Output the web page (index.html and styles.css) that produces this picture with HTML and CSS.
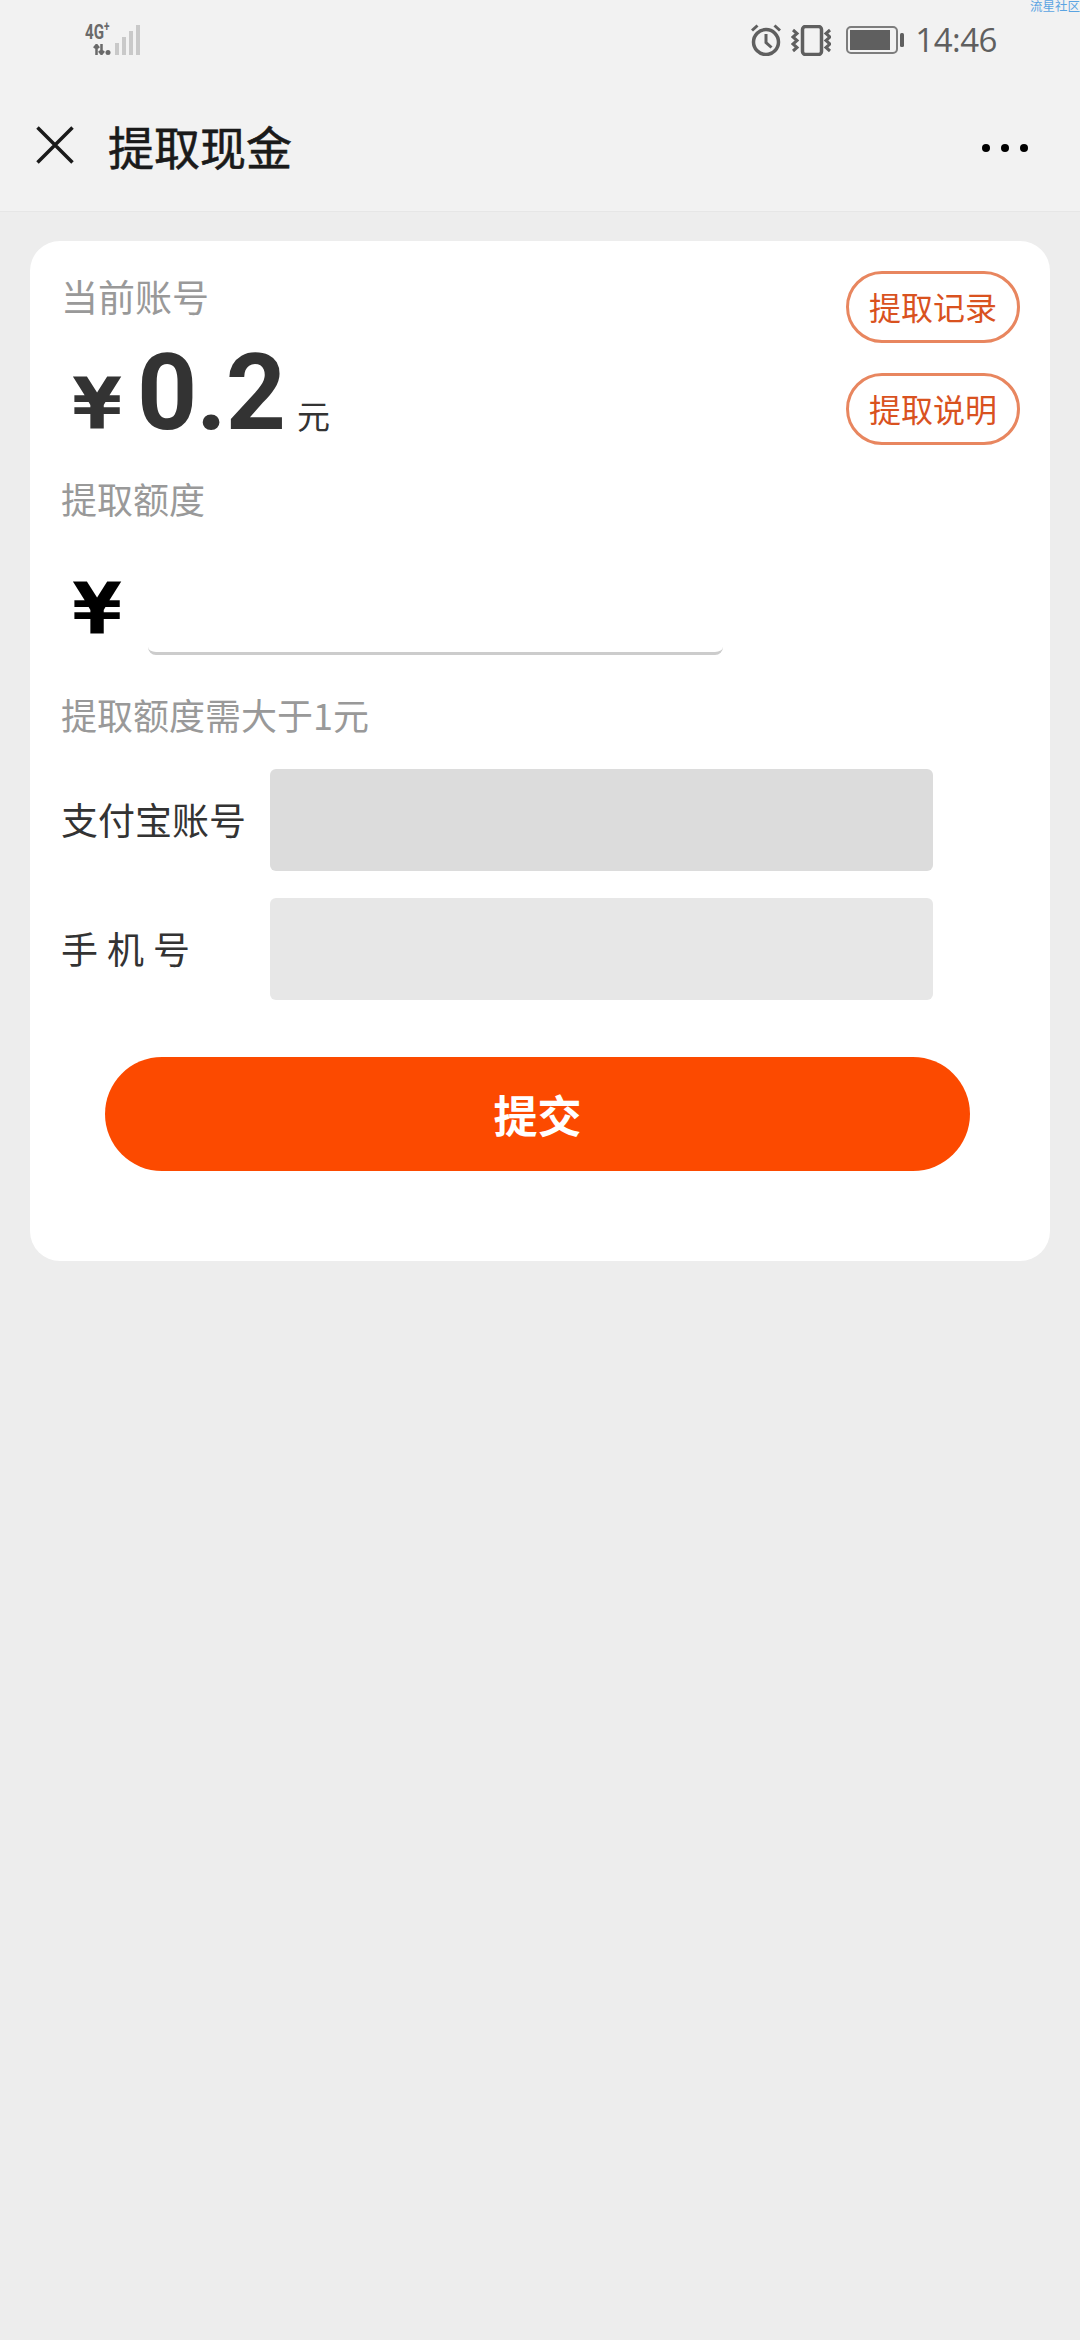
FILE: index.html
```html
<!DOCTYPE html>
<html lang="zh-CN">
<head>
  <meta charset="UTF-8">
  <title>提取现金</title>
  <link rel="stylesheet" href="styles.css">
</head>
<body>

  <div class="topbar">
    <div class="status">
      <div class="signal">
        <div class="signal-type">
          <span class="net">4G<sup>+</sup></span>
          <svg class="arrows" width="18" height="11" viewBox="0 0 18 11">
            <path d="M3.500 11V1M1 4l2.500-3L6 4M8.500 0v10M6 7l2.500 3L11 7" fill="none" stroke="#6a6a6a" stroke-width="2.500"/>
            <circle cx="15" cy="8.500" r="2.500" fill="#6a6a6a"/>
          </svg>
        </div>
        <div class="bars">
          <span class="bar bar-1"></span>
          <span class="bar bar-2"></span>
          <span class="bar bar-3"></span>
          <span class="bar bar-4"></span>
        </div>
      </div>
      <div class="status-right">
        <svg width="30" height="32" viewBox="0 0 30 32">
          <circle cx="15" cy="18" r="12.500" fill="none" stroke="#5f5f5f" stroke-width="3.500"/>
          <path d="M15 10v8.500l5.500 5" fill="none" stroke="#5f5f5f" stroke-width="3"/>
          <path d="M1 6.500L6.500 1.500M29 6.500L23.500 1.500" fill="none" stroke="#5f5f5f" stroke-width="3"/>
        </svg>
        <svg class="vibrate" width="40" height="31" viewBox="0 0 40 31">
          <rect x="11.500" y="1.500" width="19" height="28" rx="3" fill="none" stroke="#5f5f5f" stroke-width="3.500"/>
          <path d="M2 5l4 3.500-4 3.500 4 3.500-4 3.500 4 3.500-4 3.500M39 5l-4 3.500 4 3.500-4 3.500 4 3.500-4 3.500 4 3.500" fill="none" stroke="#5f5f5f" stroke-width="3"/>
        </svg>
        <svg class="battery" width="58" height="28" viewBox="0 0 58 28">
          <rect x="1" y="1" width="50" height="26" rx="4" fill="none" stroke="#7d7d7d" stroke-width="2"/>
          <rect x="4" y="4" width="40" height="20" fill="#5f5f5f"/>
          <rect x="54" y="7" width="4" height="14" rx="1.500" fill="#5f5f5f"/>
        </svg>
        <span class="time">14:46</span>
      </div>
      <span class="watermark">流星社区</span>
    </div>

    <div class="nav">
      <svg class="close" width="38" height="38" viewBox="0 0 38 38">
        <path d="M1.500 1.500l35 35M36.500 1.500l-35 35" fill="none" stroke="#1a1a1a" stroke-width="3.500"/>
      </svg>
      <h1 class="nav-title">提取现金</h1>
      <div class="more">
        <span class="dot"></span>
        <span class="dot"></span>
        <span class="dot"></span>
      </div>
    </div>
  </div>

  <div class="card">
    <div class="balance">
      <div class="balance-left">
        <div class="label label-big">当前账号</div>
        <div class="amount">
          <span class="yen yen-dark">¥</span>
          <span class="amount-num">0.2</span>
          <span class="amount-unit">元</span>
        </div>
      </div>
      <div class="links">
        <a class="pill">提取记录</a>
        <a class="pill">提取说明</a>
      </div>
    </div>

    <div class="label">提取额度</div>
    <div class="withdraw">
      <span class="yen">¥</span>
      <div class="withdraw-input"></div>
    </div>
    <div class="label hint">提取额度需大于1元</div>

    <div class="field">
      <span class="field-name">支付宝账号</span>
      <div class="field-box field-dark"></div>
    </div>
    <div class="field">
      <span class="field-name field-spaced">手机号</span>
      <div class="field-box"></div>
    </div>

    <button class="submit">提交</button>
  </div>

</body>
</html>
```

FILE: styles.css
```css
body { margin: 0; background: #ededed; font-family: "Noto Sans CJK SC", Roboto, sans-serif; min-height: 2340px; }

.topbar { background: #f2f2f2; border-bottom: 1px solid #e6e6e6; height: 211px; }
.status { display: flex; justify-content: space-between; height: 76px; padding: 24px 83px 0 85px; box-sizing: border-box; position: relative; }
.signal { display: flex; align-items: flex-end; height: 31px; gap: 4px; }
.signal-type { display: flex; flex-direction: column; align-items: flex-start; width: 26px; }
.net { font-family: "Roboto", sans-serif; font-size: 21px; font-weight: 700; line-height: 18px; color: #6a6a6a; white-space: nowrap; transform: scaleX(0.72); transform-origin: left center; }
.net sup { font-size: 14px; line-height: 0; }
.arrows { margin: 3px 0 0 8px; }
.bars { display: flex; align-items: flex-end; gap: 3px; height: 31px; }
.bar { display: block; width: 4px; background: #c9c9c9; }
.bar-1 { height: 12px; }
.bar-2 { height: 18px; }
.bar-3 { height: 24px; }
.bar-4 { height: 30px; }
.status-right { display: flex; align-items: center; height: 32px; }
.vibrate { margin-left: 10px; }
.battery { margin-left: 15px; }
.time { margin-left: 11px; font-family: "Open Sans", sans-serif; font-size: 33px; line-height: 32px; letter-spacing: -0.5px; color: #5f5f5f; }
.watermark { position: absolute; top: -2px; right: 0; font-size: 12.5px; line-height: 16px; color: #5ba4e2; }

.nav { display: flex; align-items: center; height: 135px; padding: 0 52px 0 36px; box-sizing: border-box; }
.close { display: block; margin-top: 3px; }
.nav-title { margin: 2px 0 0 34px; font-size: 46px; font-weight: 400; -webkit-text-stroke: 0.6px #1a1a1a; color: #1a1a1a; flex: 1; }
.more { display: flex; gap: 11px; margin-top: 8px; }
.dot { display: block; width: 8px; height: 8px; border-radius: 50%; background: #000; }

.card { background: #fff; border-radius: 30px; margin: 29px 30px 0; padding: 30px 30px 90px 31px; }
.label { font-size: 36px; line-height: 50px; color: #999; }
.label-big { font-size: 37px; }
.hint { margin-top: 34px; }

.balance { display: flex; justify-content: space-between; height: 202px; }
.balance-left { display: flex; flex-direction: column; }
.amount { display: flex; align-items: baseline; height: 120px; padding: 13px 0 0 11px; }
.yen { font-family: "DejaVu Sans", sans-serif; font-size: 72px; font-weight: 700; line-height: 72px; color: #000; }
.yen-dark { color: #333; }
.amount-num { margin-left: 15px; font-family: "Roboto", sans-serif; font-size: 105px; font-weight: 700; line-height: 120px; letter-spacing: -1px; color: #333; }
.amount-unit { margin-left: 12px; font-size: 33px; color: #333; }
.links { display: flex; flex-direction: column; gap: 30px; }
.pill { display: flex; align-items: center; justify-content: center; width: 174px; height: 72px; padding-bottom: 2px; border: 3px solid #e8865f; border-radius: 36px; box-sizing: border-box; font-size: 32px; color: #d9521f; }

.withdraw { display: flex; align-items: flex-end; height: 132px; padding-left: 11px; }
.withdraw .yen { margin-bottom: 10px; }
.withdraw-input { width: 575px; height: 30px; margin-left: 26px; border-bottom: 3px solid #ccc; border-radius: 0 0 8px 8px; box-sizing: border-box; }

.field { display: flex; align-items: center; margin-top: 27px; }
.hint + .field { margin-top: 30px; }
.field-name { width: 209px; padding-bottom: 2px; font-size: 37px; color: #333; }
.field-spaced { letter-spacing: 9px; }
.field-box { width: 663px; height: 102px; border-radius: 6px; background: #e7e7e7; }
.field-dark { background: #dcdcdc; }

.submit { display: block; width: 865px; height: 114px; margin: 57px 0 0 44px; padding: 0; border: 0; border-radius: 57px; background: #fc4a00; font-family: inherit; font-size: 44px; font-weight: 700; color: #fff; }
```
